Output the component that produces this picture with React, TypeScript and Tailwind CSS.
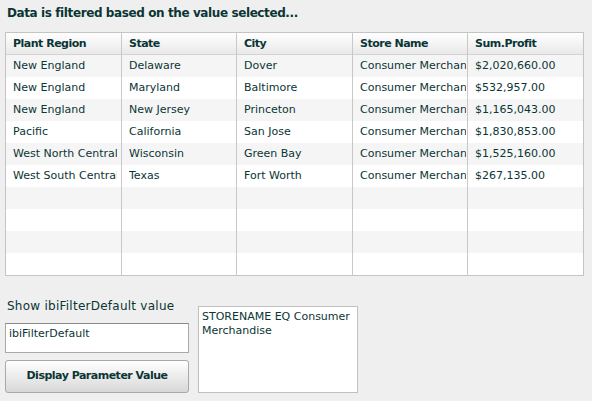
import React from "react";

const cols = [
  { title: "Plant Region", w: "w-[116px]", pr: "pr-[4px]", cells: ["New England", "New England", "New England", "Pacific", "West North Central", "West South Central"] },
  { title: "State", w: "w-[115px]", pr: "pr-[2px]", cells: ["Delaware", "Maryland", "New Jersey", "California", "Wisconsin", "Texas"] },
  { title: "City", w: "w-[116px]", pr: "pr-[2px]", cells: ["Dover", "Baltimore", "Princeton", "San Jose", "Green Bay", "Fort Worth"] },
  { title: "Store Name", w: "w-[115px]", pr: "pr-[1px]", cells: Array(6).fill("Consumer Merchandise") },
  { title: "Sum.Profit", w: "flex-1", pr: "pr-[2px]", cells: ["$2,020,660.00", "$532,957.00", "$1,165,043.00", "$1,830,853.00", "$1,525,160.00", "$267,135.00"] },
];

export default function App() {
  const rows = Array.from({ length: 10 }, (_, i) => i);
  return (
    <div className="w-[592px] h-[401px] bg-[#efefef] text-[#0b3535] font-['DejaVu_Sans',sans-serif] text-[11px] overflow-hidden">
      <div className="pt-[5px] pl-[7px] h-[32px] font-bold text-[12px] leading-[16px] tracking-[-0.4px]">
        Data is filtered based on the value selected...
      </div>
      <div className="ml-[5px] w-[579px] h-[244px] border border-[#c4c4c4] bg-white flex">
        {cols.map((c, ci) => (
          <div key={ci} className={`${c.w} flex flex-col ${ci < 4 ? "border-r border-[#c8c8c8]" : ""}`}>
            <div className="h-[22px] border-b border-[#d4d4d4] bg-gradient-to-b from-white to-[#e9e9e9] font-bold pl-[7px] leading-[21px] whitespace-nowrap overflow-hidden tracking-[-0.5px]">
              {c.title}
            </div>
            {rows.map((r) => (
              <div
                key={r}
                className={`h-[22px] pl-[7px] ${c.pr} leading-[22px] ${r % 2 === 0 ? "bg-[#f5f5f5]" : "bg-white"}`}
              >
                <div className="whitespace-nowrap overflow-hidden">{c.cells[r] ?? "\u00a0"}</div>
              </div>
            ))}
          </div>
        ))}
      </div>
      <div className="flex pl-[5px] pt-[21px] gap-[9px]">
        <div className="w-[184px] flex flex-col">
          <div className="text-[12px] leading-[16px] pl-[2px] h-[26px] pt-[1px] tracking-[0.25px]">Show ibiFilterDefault value</div>
          <div className="h-[30px] border border-[#a8a8a8] border-t-[#8a8a8a] bg-white pl-[3px] pt-[3px] leading-[14px]">
            ibiFilterDefault
          </div>
          <div className="mt-[7px] h-[33px] rounded-[3px] border border-[#a8a8a8] bg-gradient-to-b from-white to-[#d8d8d8] flex items-center justify-center font-bold tracking-[-0.5px]">
            Display Parameter Value
          </div>
        </div>
        <div className="mt-[9px] w-[160px] h-[87px] border border-[#c0c0c0] bg-white pl-[3px] pt-[3px] leading-[14px]">
          STORENAME EQ Consumer Merchandise
        </div>
      </div>
    </div>
  );
}
